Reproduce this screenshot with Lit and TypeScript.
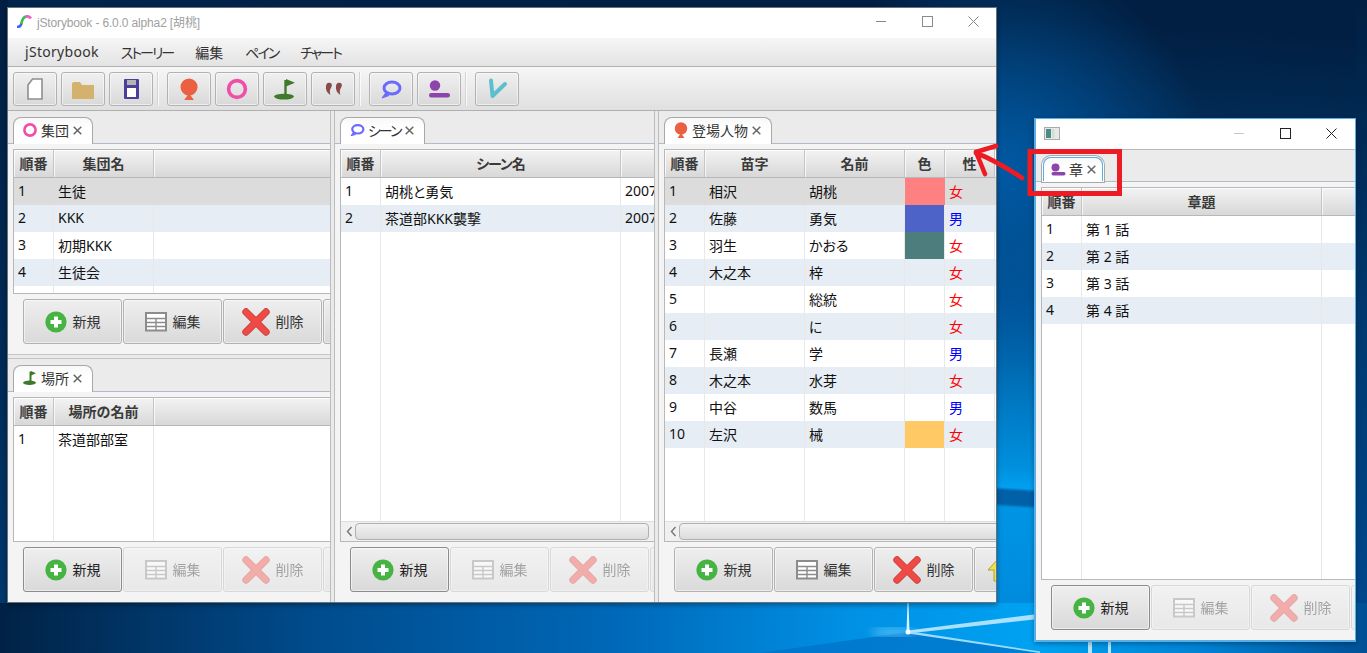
import { LitElement, html, css, svg } from "lit";
import { customElement } from "lit/decorators.js";

const ic = {
  person: svg`<circle cx="8" cy="6.5" r="6.2" fill="#ea6041"/><path d="M8 11 L11.5 16 H4.5Z" fill="#ea6041"/>`,
  group: svg`<circle cx="8" cy="8" r="5.6" fill="none" stroke="#f04fa8" stroke-width="2.6"/>`,
  place: svg`<path d="M8.5 1.5V12" stroke="#3f7a2c" stroke-width="2"/><path d="M9 1 L14 3.2 L9 5.6Z" fill="#3f7a2c"/><ellipse cx="7.5" cy="12.8" rx="6.5" ry="2.2" fill="#3f7a2c"/>`,
  scene: svg`<ellipse cx="8.8" cy="7.3" rx="5.6" ry="4.2" fill="none" stroke="#6a6aff" stroke-width="2.2"/><path d="M4.4 10.5 L2 13.6 L6.6 12.6" fill="#6a6aff" stroke="#6a6aff"/>`,
  chapter: svg`<circle cx="5.5" cy="6.5" r="4" fill="#8e44ad"/><rect x="1.5" y="11" width="14" height="3.4" rx="1.7" fill="#8e44ad"/>`,
};

const tbIcons = [
  svg`<path d="M6.5 2 H16 V22 H2 V8Z" fill="#fff" stroke="#8e8e8e" stroke-width="1.6"/>`,
  svg`<path d="M0 5 V22 H22 V7 H10 L8 4 H2Z" fill="#d4b26e" transform="translate(0 -1)"/>`,
  svg`<rect x="1" y="1" width="15" height="20" rx="1" fill="#4b3f98"/><rect x="4" y="2" width="9" height="5" fill="#b4b4b4"/><rect x="4" y="10" width="9" height="9" fill="#fff"/>`,
  svg`<g transform="translate(0 1) scale(1.38)">${ic.person}</g>`,
  svg`<circle cx="11" cy="11" r="8.4" fill="none" stroke="#f04fa8" stroke-width="3.6"/>`,
  svg`<path d="M11.5 2V18" stroke="#3f7a2c" stroke-width="2.4"/><path d="M12 1 L21 4.8 L12 8.6Z" fill="#3f7a2c"/><ellipse cx="10" cy="18.6" rx="10" ry="2.9" fill="#3f7a2c"/>`,
  svg`<path d="M5 2 C8 1.4 9.6 3 8.6 5.6 C7.8 7.6 6 9 7.4 14 C4 12 2.4 9 3 5 C3.2 3.4 4 2.2 5 2Z M15 2 C18 1.4 19.6 3 18.6 5.6 C17.8 7.6 16 9 17.4 14 C14 12 12.4 9 13 5 C13.2 3.4 14 2.2 15 2Z" fill="#8a4a4a"/>`,
  svg`<ellipse cx="12" cy="9" rx="8" ry="6" fill="none" stroke="#6a6aff" stroke-width="3"/><path d="M6 13.5 L2 19 L9 16.5" fill="#6a6aff" stroke="#6a6aff" stroke-linejoin="round"/>`,
  svg`<circle cx="7" cy="6.5" r="5.2" fill="#8e44ad"/><rect x="1" y="14" width="21" height="4.4" rx="2.2" fill="#8e44ad"/>`,
  svg`<path d="M5 2.5 L6.5 18 L19 6" fill="none" stroke="#5cc0cc" stroke-width="4" stroke-linecap="round" stroke-linejoin="round"/>`,
];

const plusIcon = svg`<svg width="22" height="22" viewBox="0 0 22 22"><circle cx="11" cy="11" r="10.6" fill="#46b343"/><path d="M11 5.5V16.5M5.5 11H16.5" stroke="#fff" stroke-width="4"/></svg>`;
const gridIcon = svg`<svg width="22" height="20" viewBox="0 0 22 20"><rect x="1" y="1" width="20" height="17.5" fill="#fff" stroke="#8c8c8c" stroke-width="2"/><path d="M1 6.5H21M1 10.5H21M1 14.5H21M11 6V18" stroke="#8c8c8c" stroke-width="1.4"/></svg>`;
const crossIcon = svg`<svg width="28" height="28" viewBox="0 0 28 28"><path d="M4 4L24 24M24 4L4 24" stroke="#c94040" stroke-width="7.4" stroke-linecap="round"/><path d="M4 4L24 24M24 4L4 24" stroke="#f04a45" stroke-width="5.6" stroke-linecap="round"/></svg>`;
const upIcon = svg`<svg width="22" height="24" viewBox="0 0 22 24"><path d="M11 1L21 12H15V23H7V12H1Z" fill="#f0e04a" stroke="#a8a040"/></svg>`;

type Col = { w: number; title: string };
type Row = { cells: string[]; color?: string; sex?: string; selected?: boolean };

const tabs = {
  group: {
    icon: ic.group, title: "集団",
    cols: [{ w: 40, title: "順番" }, { w: 100, title: "集団名" }],
    rows: [{ cells: ["1", "生徒"], selected: true }, { cells: ["2", "KKK"] }, { cells: ["3", "初期KKK"] }, { cells: ["4", "生徒会"] }],
  },
  place: {
    icon: ic.place, title: "場所",
    cols: [{ w: 40, title: "順番" }, { w: 100, title: "場所の名前" }],
    rows: [{ cells: ["1", "茶道部部室"] }],
  },
  scene: {
    icon: ic.scene, title: "シーン", kana: true,
    cols: [{ w: 40, title: "順番" }, { w: 240, title: "シーン名" }],
    rows: [{ cells: ["1", "胡桃と勇気", "2007"] }, { cells: ["2", "茶道部KKK襲撃", "2007"] }],
  },
  chapter: {
    icon: ic.chapter, title: "章",
    cols: [{ w: 40, title: "順番" }, { w: 240, title: "章題" }],
    rows: [{ cells: ["1", "第 1 話"] }, { cells: ["2", "第 2 話"] }, { cells: ["3", "第 3 話"] }, { cells: ["4", "第 4 話"] }],
  },
  person: {
    icon: ic.person, title: "登場人物",
    cols: [{ w: 40, title: "順番" }, { w: 100, title: "苗字" }, { w: 100, title: "名前" }, { w: 40, title: "色" }, { w: 50, title: "性" }],
    rows: [
      ["1", "相沢", "胡桃", "#ff8080", "女"], ["2", "佐藤", "勇気", "#4d63c8", "男"], ["3", "羽生", "かおる", "#4d7d7d", "女"],
      ["4", "木之本", "梓", "", "女"], ["5", "", "総統", "", "女"], ["6", "", "に", "", "女"],
      ["7", "長瀬", "学", "", "男"], ["8", "木之本", "水芽", "", "女"], ["9", "中谷", "数馬", "", "男"], ["10", "左沢", "械", "#ffc966", "女"],
    ].map((r, i) => ({ cells: [r[0], r[1], r[2], "", r[4]], color: r[3], sex: r[4], selected: i === 0 })),
  },
};

@customElement("app-root")
export class AppRoot extends LitElement {
  static styles = css`
    :host { display: block; width: 1367px; height: 653px; position: relative; overflow: hidden;
      font-family: "Noto Sans", "Noto Sans CJK JP", sans-serif; font-size: 14px; color: #222; background: #02234a;
      font-feature-settings: "palt" 1; }
    * { box-sizing: border-box; }
    .wall { position: absolute; inset: 0; }
    .win { position: absolute; display: flex; flex-direction: column; background: #f4f4f4; overflow: hidden; }
    .main { left: 7px; top: 7px; width: 990px; height: 596px; border: 1px solid #66727e; box-shadow: 0 2px 5px rgba(0,0,0,.35); }
    .sub { left: 1034px; top: 118px; width: 322px; height: 524px; border: 1px solid #58aee6; border-width: 1px 1px 2px 2px; box-shadow: 0 2px 5px rgba(0,0,0,.3); }
    .title { height: 30px; flex: none; background: #fff; display: flex; align-items: center; padding-bottom: 3px; font-family: "Liberation Sans", "Noto Sans CJK JP", sans-serif; font-size: 12px; letter-spacing: -.15px; color: #a0a0a0; }
    .sub .title { padding-bottom: 2px; padding-right: 1px; }
    .logo { margin: 0 5px 0 8px; display: block; }
    .caption { margin-left: auto; display: flex; }
    .cap { width: 46px; height: 27px; display: flex; align-items: center; justify-content: center; }
    .menu { height: 29px; flex: none; background: linear-gradient(#f6f6f6, #e3e3e3); border-bottom: 1px solid #b4b4b4; display: flex; align-items: center; padding: 0 10px 1px 17px; gap: 22px; font-size: 14px; color: #333; }
    .brand { letter-spacing: .3px; }
    .kana { letter-spacing: -2px; }
    .toolbar { height: 44px; flex: none; background: linear-gradient(#f6f6f6, #e0e0e0); border-bottom: 1px solid #b0b0b0; display: flex; align-items: center; padding: 0 0 0 5px; }
    .tb { width: 44px; height: 34px; margin-right: 4px; border: 1px solid #b2b2b2; border-radius: 3px; background: linear-gradient(#f0f0f0, #d9d9d9); box-shadow: inset 0 0 0 1px rgba(255,255,255,.55); display: flex; align-items: center; justify-content: center; }
    .tb svg { display: block; }
    .sep { width: 2px; height: 34px; background: #d4d4d4; border-right: 1px solid #fafafa; margin: 0 8px 0 0; }
    .body { flex: 1; min-height: 0; display: flex; }
    .stack { display: flex; flex-direction: column; min-width: 0; }
    .s1 { width: 322px; flex: none; }
    .s2 { width: 319px; flex: none; }
    .s3 { flex: 1; }
    .vdiv { width: 5px; flex: none; background: #eaeaea; border-left: 1px solid #bdbdbd; border-right: 1px solid #bdbdbd; }
    .hdiv { height: 5px; flex: none; background: #eaeaea; border-top: 1px solid #c4c4c4; border-bottom: 1px solid #c4c4c4; }
    .pane { flex: 1; min-height: 0; display: flex; flex-direction: column; overflow: hidden; background: #f4f4f4; }
    .sub .pane { border-top: 1px solid #b8b8b8; }
    .tabbar { height: 33px; flex: none; background: #ebebeb; border-bottom: 1px solid #b2bcc8; padding: 6px 0 0 5px; display: flex; }
    .sub .tabbar { height: 32px; }
    .tab { height: 27px; padding: 0 10px 2px 8px; border: 1px solid #a8a8a8; border-bottom: none; border-radius: 8px 8px 0 0; background: linear-gradient(#f8f8f8, #fff 40%); display: flex; align-items: center; gap: 3px; color: #333; font-size: 14px; }
    .tab.focus { border-color: #58aee6; box-shadow: 0 0 0 1px #fff, 0 0 0 2px #a8a8a8; height: 24px; margin: 1px 0 0 2px; padding: 0 6px 2px 6px; gap: 3px; }
    .tab svg { display: block; }
    .x { margin-left: 1px; margin-top: 1px; }
    .table { flex: 1; min-height: 0; margin: 5px -5px 0 5px; border: 1px solid #b8b8b8; background: #fff; display: flex; flex-direction: column; overflow: hidden; }
    .row { display: flex; flex: none; height: 27px; }
    .row.odd { background: #e6edf4; }
    .row.sel { background: #dcdcdc; }
    .row.fill { flex: 1; height: auto; min-height: 0; }
    .head { height: 28px; border-bottom: 1px solid #b8b8b8; }
    .th { flex: none; display: flex; align-items: center; justify-content: center; padding-bottom: 2px; font-weight: 700; color: #3a3a3a; background: linear-gradient(#f3f3f3, #d8d8d8); border-right: 1px solid #c4c4c4; box-shadow: inset 1px 1px 0 rgba(255,255,255,.75); white-space: nowrap; }
    .th.tight { letter-spacing: -1px; }
    .td { flex: none; display: flex; align-items: center; padding: 0 0 2px 4px; border-right: 1px solid #e8e8e8; color: #111; white-space: nowrap; overflow: hidden; }
    .sel .td { border-right-color: transparent; }
    .last { flex: 1 1 0; min-width: 0; border-right: none; }
    .f { color: #f00; } .m { color: #00f; }
    .scroll { height: 20px; flex: none; background: #f0f0f0; border-top: 1px solid #dedede; display: flex; align-items: center; padding: 0 0 0 2px; }
    .arrow { width: 12px; display: flex; justify-content: center; }
    .thumb { flex: 1; height: 17px; border: 1px solid #b0b0b0; border-radius: 4px; background: linear-gradient(#f2f2f2, #dcdcdc); margin-right: 9px; }
    .thumb.long { margin-right: -30px; }
    .btns { flex: none; height: 45px; margin: 5px 0 10px; padding-left: 15px; display: flex; gap: 1px; }
    .btn { flex: none; width: 99px; height: 45px; border: 1px solid #b2b2b2; border-radius: 3px; background: linear-gradient(#efefef, #d9d9d9); box-shadow: inset 0 0 0 1px rgba(255,255,255,.5); display: flex; align-items: center; justify-content: center; gap: 6px; color: #333; }
    .btn span { padding-bottom: 2px; }
    .btn svg { display: block; flex: none; }
    .btn.off { opacity: .42; }
    .btn.def { border-color: #8c8c8c; color: #222; }
    .btn.up { justify-content: flex-start; padding-left: 12px; }
    .mark { position: absolute; left: 0; top: 0; pointer-events: none; }
  `;

  renderTable(t: { cols: Col[]; rows: Row[]; kana?: boolean }, third = 0, scroll = "") {
    const cols = third ? [...t.cols, { w: third, title: "" }] : t.cols;
    const w = (c: Col) => `width:${c.w}px`;
    return html`<div class="table">
      <div class="row head">
        ${cols.map((c, j) => html`<div class="th ${t.kana && j === 1 ? "tight" : ""}" style=${w(c)}>${c.title}</div>`)}
        <div class="th last"></div>
      </div>
      ${t.rows.map((r, i) => html`<div class="row ${i % 2 ? "odd" : ""} ${r.selected ? "sel" : ""}">
        ${cols.map((c, j) => {
          const isColor = r.color !== undefined && j === 3;
          const isSex = r.sex !== undefined && j === 4;
          return html`<div class="td ${isSex ? (r.sex === "女" ? "f" : "m") : ""}" style="${w(c)}${isColor && r.color ? `;background-color:${r.color}` : ""}">${r.cells[j] ?? ""}</div>`;
        })}
        <div class="td last">${r.cells[cols.length] ?? ""}</div>
      </div>`)}
      <div class="row fill">
        ${cols.map((c) => html`<div class="td" style=${w(c)}></div>`)}
        <div class="td last"></div>
      </div>
      ${scroll ? html`<div class="scroll"><span class="arrow"><svg width="7" height="11" viewBox="0 0 7 11"><path d="M5.5 1L1.5 5.5L5.5 10" fill="none" stroke="#777" stroke-width="1.4"/></svg></span><div class="thumb ${scroll}"></div></div>` : ""}
    </div>`;
  }

  renderButtons(active: boolean, up = false) {
    return html`<div class="btns">
      <div class="btn ${active ? "" : "def"}">${plusIcon}<span>新規</span></div>
      <div class="btn ${active ? "" : "off"}">${gridIcon}<span>編集</span></div>
      <div class="btn ${active ? "" : "off"}">${crossIcon}<span>削除</span></div>
      <div class="btn ${active ? "" : "off"} ${up ? "up" : ""}">${up ? upIcon : ""}</div>
    </div>`;
  }

  renderPane(t: any, o: { active?: boolean; third?: number; scroll?: string; up?: boolean; focus?: boolean }) {
    return html`<div class="pane">
      <div class="tabbar"><div class="tab ${o.focus ? "focus" : ""}">
        <svg width="16" height="16" viewBox="0 0 16 16">${t.icon}</svg><span class=${t.kana ? "kana" : ""}>${t.title}</span>
        <svg class="x" width="9" height="9" viewBox="0 0 9 9"><path d="M.7.7L8.3 8.3M8.3.7L.7 8.3" stroke="#666" stroke-width="1.5"/></svg>
      </div></div>
      ${this.renderTable(t, o.third ?? 0, o.scroll ?? "")}
      ${this.renderButtons(!!o.active, !!o.up)}
    </div>`;
  }

  caption(light: boolean) {
    const stroke = light ? "#8a8a8a" : "#222";
    const min = light ? "#888" : "#c8c8c8";
    return html`<div class="caption">
      <div class="cap"><svg width="11" height="11"><path d="M0 5.5H10" stroke=${min}/></svg></div>
      <div class="cap"><svg width="11" height="11"><rect x=".5" y=".5" width="10" height="10" fill="none" stroke=${stroke}/></svg></div>
      <div class="cap"><svg width="11" height="11"><path d="M.5.5L10.5 10.5M10.5.5L.5 10.5" stroke=${stroke}/></svg></div>
    </div>`;
  }

  render() {
    const groups = [3, 4, 2, 1];
    let k = 0;
    const sizes = [[18, 24], [22, 20], [17, 22], [22, 24], [22, 22], [22, 22], [20, 16], [22, 20], [23, 19], [22, 21]];
    return html`
      <svg class="wall" width="1367" height="653" viewBox="0 0 1367 653">
        <defs>
          <linearGradient id="sky" x1="0.55" y1="0" x2="0.42" y2="1">
            <stop offset="0" stop-color="#011f42"/><stop offset=".2" stop-color="#02305e"/><stop offset=".42" stop-color="#004f92"/><stop offset=".68" stop-color="#0090de"/><stop offset=".71" stop-color="#00a0f0"/><stop offset=".715" stop-color="#0060a8"/><stop offset=".735" stop-color="#0060a8"/><stop offset=".74" stop-color="#0094e4"/><stop offset="1" stop-color="#0084d8"/>
          </linearGradient>
          <radialGradient id="glow" gradientUnits="userSpaceOnUse" cx="1000" cy="170" r="210">
            <stop offset="0" stop-color="#005aa4"/><stop offset="1" stop-color="#005aa4" stop-opacity="0"/>
          </radialGradient>
          <linearGradient id="side" x1="0" y1="0" x2="0" y2="1">
            <stop offset="0" stop-color="#011f42"/><stop offset=".6" stop-color="#012c58"/><stop offset="1" stop-color="#003a72"/>
          </linearGradient>
          <linearGradient id="right" x1="0" y1="0" x2="0" y2="1">
            <stop offset="0" stop-color="#011f42"/><stop offset=".5" stop-color="#003a70"/><stop offset="1" stop-color="#004a90"/>
          </linearGradient>
          <linearGradient id="edge" x1="0" y1="0" x2="1" y2="0">
            <stop offset="0" stop-color="#012246"/><stop offset=".22" stop-color="#004a8a"/><stop offset=".45" stop-color="#0068b8"/><stop offset=".62" stop-color="#0090e4"/><stop offset=".76" stop-color="#00a2f2"/><stop offset=".88" stop-color="#0082d4"/><stop offset="1" stop-color="#005096"/>
          </linearGradient>
          <filter id="soft"><feGaussianBlur stdDeviation="5"/></filter>
        </defs>
        <rect width="1367" height="653" fill="url(#sky)"/>
        <rect width="1367" height="653" fill="url(#glow)"/>
        <rect x="0" width="8" height="653" fill="url(#side)"/>
        <rect x="1356" width="11" height="653" fill="url(#right)"/>
        <rect y="603" width="1367" height="50" fill="url(#edge)"/>
        <path d="M908 632L1040 653H760Z" fill="#0070c6" opacity=".7"/>
        <rect x="1088" y="642" width="4" height="11" fill="#b8e4fa"/>
        <rect x="1108" y="642" width="3" height="11" fill="#b8e4fa"/>
        <ellipse cx="893" cy="632" rx="22" ry="3.5" fill="#7fd4ff" opacity=".8" filter="url(#soft)"/>
        <path d="M907.5 603H908.5L909.5 632H906.5Z" fill="#d8f3ff"/>
        <path d="M908 630.5L1034 614.5V619.5L908 633.5Z" fill="#a8e2ff"/>
        <path d="M908 631L1040 651.5V653L908 633.5Z" fill="#9adcff"/>
        <circle cx="908" cy="632" r="2.5" fill="#fff"/>
      </svg>

      <div class="win main">
        <div class="title">
          <svg class="logo" width="16" height="13" viewBox="0 0 16 13"><path d="M1 12 C3 12 5 11 5.5 8" fill="none" stroke="#3f62ff" stroke-width="2.6"/><path d="M5.3 9 C6 5 7 2 10 1.6" fill="none" stroke="#35c04a" stroke-width="2.6"/><path d="M9.5 1.8 C11 1 13 1 15 3.4" fill="none" stroke="#f05cc8" stroke-width="2.6"/></svg>
          <span>jStorybook - 6.0.0 alpha2 [胡桃]</span>
          ${this.caption(true)}
        </div>
        <div class="menu"><span class="brand">jStorybook</span><span class="kana">ストーリー</span><span>編集</span><span class="kana">ペイン</span><span class="kana">チャート</span></div>
        <div class="toolbar">
          ${groups.map((n, gi) => html`
            ${Array.from({ length: n }, () => { const i = k++; const [sw, sh] = sizes[i]; return html`<div class="tb"><svg width=${sw} height=${sh} viewBox="0 0 ${sw} ${sh}">${tbIcons[i]}</svg></div>`; })}
            ${gi < 3 ? html`<div class="sep"></div>` : ""}
          `)}
        </div>
        <div class="body">
          <div class="stack s1">
            ${this.renderPane(tabs.group, { active: true })}
            <div class="hdiv"></div>
            ${this.renderPane(tabs.place, {})}
          </div>
          <div class="vdiv"></div>
          <div class="stack s2">${this.renderPane(tabs.scene, { third: 100, scroll: "plain" })}</div>
          <div class="vdiv"></div>
          <div class="stack s3">${this.renderPane(tabs.person, { active: true, scroll: "long", up: true })}</div>
        </div>
      </div>

      <div class="win sub">
        <div class="title">
          <svg class="logo" width="16" height="13" viewBox="0 0 16 13"><rect x=".5" y=".5" width="15" height="12" fill="#e8e8e8" stroke="#aaa"/><rect x="2" y="2" width="5" height="9" fill="#4d8a8a"/><rect x="8" y="2" width="2.5" height="9" fill="#cfe0cf"/></svg>
          ${this.caption(false)}
        </div>
        ${this.renderPane(tabs.chapter, { focus: true })}
      </div>

      <svg class="mark" width="1367" height="653" viewBox="0 0 1367 653">
        <rect x="1030" y="151.5" width="89.5" height="42" fill="none" stroke="#ed1c24" stroke-width="5"/>
        <path d="M1022 178 C1010 170 995 160 976 153 M976 152 L996 146 M976 152 L985 174" fill="none" stroke="#ed1c24" stroke-width="4.6" stroke-linecap="round"/>
      </svg>
    `;
  }
}
